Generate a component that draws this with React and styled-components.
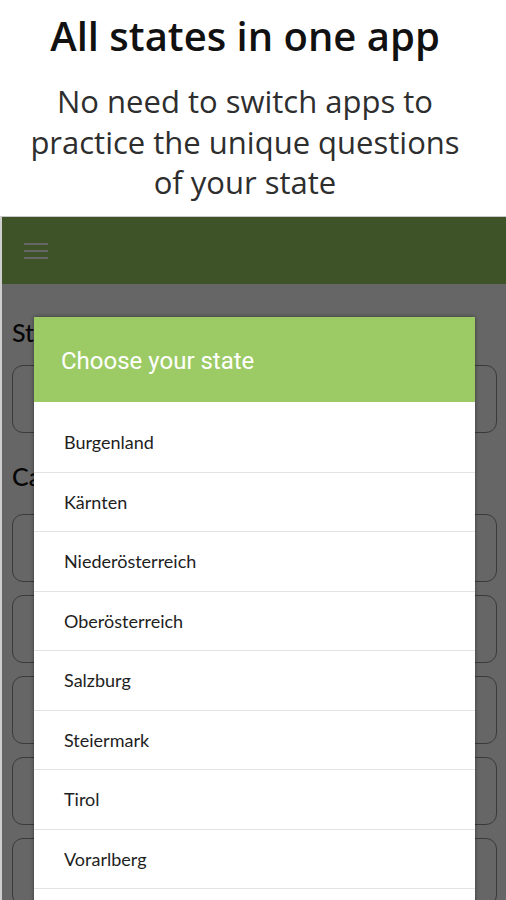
import React from "react";
import styled, { createGlobalStyle } from "styled-components";

const GlobalStyle = createGlobalStyle`
  html, body {
    margin: 0;
    padding: 0;
    background: #ffffff;
  }
  body {
    width: 506px;
    height: 900px;
    overflow: hidden;
    font-family: "Lato", "Noto Sans", sans-serif;
  }
`;

const Page = styled.div`
  width: 506px;
  height: 900px;
  display: flex;
  flex-direction: column;
  overflow: hidden;
`;

const Promo = styled.header`
  height: 216px;
  display: flex;
  flex-direction: column;
  align-items: center;
  text-align: center;
  padding: 10px 16px 0 0;
  box-sizing: border-box;
`;

const Headline = styled.h1`
  margin: 0;
  font-family: "Open Sans", sans-serif;
  font-size: 40px;
  font-weight: 600;
  line-height: 52px;
  color: #111;
  white-space: nowrap;
`;

const Subline = styled.p`
  margin: 19px 0 0;
  font-family: "Open Sans", sans-serif;
  font-size: 31px;
  font-weight: 400;
  line-height: 40.5px;
  color: #2e2e2e;
  white-space: nowrap;
`;

const Phone = styled.div`
  position: relative;
  flex: 1;
  border-top: 1px solid #c9c9c9;
  border-left: 2px solid #cfcfcf;
  overflow: hidden;
  background: #fff;
`;

const Toolbar = styled.div`
  height: 67px;
  background: #9ccf64;
  display: flex;
  align-items: center;
  padding-left: 22px;
`;

const Content = styled.div`
  padding: 33px 9px 0 10px;
`;

const SectionTitle = styled.h2`
  margin: ${(p) => p.$top}px 0 0 0;
  font-family: "Lato", sans-serif;
  font-size: 25px;
  font-weight: 500;
  line-height: 30px;
  color: #111;
`;

const CardList = styled.div`
  display: flex;
  flex-direction: column;
  gap: 13px;
  margin-top: ${(p) => p.$top}px;
`;

const Card = styled.div`
  height: 66px;
  border: 1.5px solid #929292;
  border-radius: 11px;
`;

const Overlay = styled.div`
  position: absolute;
  inset: 0;
  background: rgba(0, 0, 0, 0.6);
`;

const Dialog = styled.div`
  position: absolute;
  left: 32px;
  top: 100px;
  width: 441px;
  background: #fff;
  box-shadow: 0 0 4px rgba(0, 0, 0, 0.45);
`;

const DialogHeader = styled.div`
  height: 85px;
  background: #9ccb65;
  display: flex;
  align-items: center;
  padding-left: 27px;
  padding-top: 2px;
  box-sizing: border-box;
  color: #fff;
  font-family: "Roboto", sans-serif;
  font-size: 24px;
`;

const StateList = styled.ul`
  list-style: none;
  margin: 0;
  padding: 11px 0 0;
`;

const StateItem = styled.li`
  height: 58.5px;
  border-bottom: 1px solid #e3e3e3;
  display: flex;
  align-items: center;
  padding-left: 30px;
  font-size: 18px;
  color: #1e1e1e;
`;

function Hamburger() {
  return (
    <svg width="24" height="18" viewBox="0 0 24 18">
      <g stroke="#ffffff" strokeWidth="2">
        <line x1="0" y1="2" x2="24" y2="2" />
        <line x1="0" y1="9" x2="24" y2="9" />
        <line x1="0" y1="16" x2="24" y2="16" />
      </g>
    </svg>
  );
}

const states = [
  "Burgenland",
  "Kärnten",
  "Niederösterreich",
  "Oberösterreich",
  "Salzburg",
  "Steiermark",
  "Tirol",
  "Vorarlberg",
  "Wien",
];

export default function App() {
  return (
    <Page>
      <GlobalStyle />
      <Promo>
        <Headline>All states in one app</Headline>
        <Subline>
          No need to switch apps to
          <br />
          practice the unique questions
          <br />
          of your state
        </Subline>
      </Promo>
      <Phone>
        <Toolbar>
          <Hamburger />
        </Toolbar>
        <Content>
          <SectionTitle $top={0}>State</SectionTitle>
          <CardList $top={18}>
            <Card />
          </CardList>
          <SectionTitle $top={28}>Categories</SectionTitle>
          <CardList $top={23}>
            <Card />
            <Card />
            <Card />
            <Card />
            <Card />
          </CardList>
        </Content>
        <Overlay />
        <Dialog>
          <DialogHeader>Choose your state</DialogHeader>
          <StateList>
            {states.map((s) => (
              <StateItem key={s}>{s}</StateItem>
            ))}
          </StateList>
        </Dialog>
      </Phone>
    </Page>
  );
}
